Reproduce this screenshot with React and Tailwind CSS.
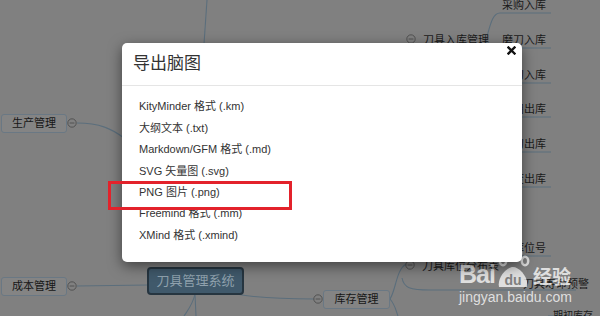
const font = 'font-["Liberation_Sans","Noto_Sans_CJK_SC",sans-serif]'

const formats = [
  'KityMinder 格式 (.km)',
  '大纲文本 (.txt)',
  'Markdown/GFM 格式 (.md)',
  'SVG 矢量图 (.svg)',
  'PNG 图片 (.png)',
  'Freemind 格式 (.mm)',
  'XMind 格式 (.xmind)',
]

// right-hand branches of 刀具入库管理 (label, underline y)
const leaves = [
  ['采购入库', 13],
  ['磨刀入库', 48],
  ['修刀入库', 83],
  ['领用出库', 117],
  ['磨刀出库', 152],
  ['报废出库', 187],
  ['刀具库位号', 256],
]

function Node({ x, y, w, label }) {
  return (
    <div
      className="absolute flex h-[19px] items-center justify-center rounded-[3px] border border-[#6a7884] bg-[#848484] text-[11px] text-[#161616]"
      style={{ left: x, top: y, width: w }}
    >
      {label}
    </div>
  )
}

function Fold({ x, y }) {
  return (
    <svg className="absolute" style={{ left: x - 5, top: y - 5 }} width="10" height="10" viewBox="0 0 10 10">
      <circle cx="5" cy="5" r="4.2" fill="#808080" stroke="#4d4d4d" strokeWidth="0.9" />
      <path d="M2.6 5h4.8" stroke="#4d4d4d" strokeWidth="0.9" />
    </svg>
  )
}

function MindMap() {
  return (
    <>
      <svg className="absolute inset-0" width="600" height="316" viewBox="0 0 600 316" fill="none">
        <g stroke="#5b6e7c" strokeWidth="1.1">
          <path d="M207 0 L204 44" />
          <path d="M77 123 C100 123 112 129 124 138" />
          <path d="M77 286 L148 285" />
          <path d="M236 294 C262 299 292 299 314 299" />
          <path d="M195 294 C193 304 188 310 184 316" />
          <path d="M195 294 L196 316" />
          {leaves.slice(0, 6).map(([, y], i) => (
            <path key={i} d={`M486 40 C490 ${(40 + y) / 2} 492 ${y} 500 ${y} L551 ${y}`} />
          ))}
          <path d="M500 256 L551 256" />
          <path d="M390 299 C396 290 396 270 406 264" />
          <path d="M390 299 C396 306 396 312 398 316" />
          <path d="M402 278 C404 288 410 290 430 290 L576 290" />
          <path d="M548 316 L590 316" />
        </g>
      </svg>

      <Node x={1} y={114} w={66} label="生产管理" />
      <Fold x={72} y={123} />
      <Node x={1} y={277} w={66} label="成本管理" />
      <Fold x={72} y={286} />
      <Fold x={318} y={299} />
      <Node x={323} y={290} w={67} label="库存管理" />

      <div className="absolute left-[147px] top-[267px] flex h-[28px] w-[97px] items-center justify-center rounded-[4px] border-2 border-[#263540] bg-[#40596b] text-[13px] text-[#8fa1ad]">
        刀具管理系统
      </div>

      <Fold x={411} y={39} />
      <div className="absolute left-[423px] top-[32px] text-[11px] text-[#1a1a1a]">刀具入库管理</div>
      <Fold x={410} y={265} />
      <div className="absolute left-[422px] top-[258px] text-[11px] text-[#1a1a1a]">刀具库位分布表</div>
      <div className="absolute left-[523px] top-[276px] text-[11px] text-[#1a1a1a]">刀具寿命预警</div>
      <div className="absolute left-[553px] top-[308px] whitespace-nowrap text-[10px] text-[#1a1a1a]">期初库存</div>

      {leaves.map(([label, y]) => (
        <div
          key={label}
          className="absolute flex w-[50px] justify-end whitespace-nowrap text-[11px] leading-none text-[#1a1a1a]"
          style={{ left: 496, top: y - 13 }}
        >
          {label}
        </div>
      ))}
    </>
  )
}

function Watermark() {
  return (
    <div className="pointer-events-none absolute left-[459px] top-[247px] flex flex-col text-white/75">
      <div className="flex items-end">
        <span className="text-[25px] font-bold leading-none tracking-[-1px]">Bai</span>
        <svg width="36" height="42" viewBox="0 0 36 42" className="-mb-[2px]">
          <g fill="none" stroke="rgba(255,255,255,0.75)" strokeWidth="2.5">
            <ellipse cx="8" cy="14" rx="3.2" ry="4.2" />
            <ellipse cx="15" cy="6" rx="3.2" ry="4.2" />
            <ellipse cx="23" cy="6" rx="3.2" ry="4.2" />
            <ellipse cx="30" cy="14" rx="3.2" ry="4.2" />
          </g>
          <path d="M4 40 C2 30 12 20 18 20 C24 20 34 30 32 40 Z" fill="rgba(255,255,255,0.75)" />
          <text x="18" y="38" textAnchor="middle" fontSize="14" fontWeight="700" fill="#808080" fontFamily="Liberation Sans, sans-serif">du</text>
        </svg>
        <span className="ml-[2px] text-[19px] font-bold leading-none">经验</span>
      </div>
      <span className="mt-[3px] text-[14px] leading-none">jingyan.baidu.com</span>
    </div>
  )
}

export default function App() {
  return (
    <div className={`relative h-[316px] w-[600px] overflow-hidden bg-[#808080] ${font}`}>
      <MindMap />
      <Watermark />

      <div className="absolute left-[122px] top-[43px] w-[400px] rounded-[5px] bg-white shadow-[0_4px_14px_rgba(0,0,0,0.5)]">
        <div className="relative flex h-[43px] items-center border-b border-[#e5e5e5] pl-[11px]">
          <h3 className="text-[17px] font-normal text-[#333]">导出脑图</h3>
          <svg className="absolute right-[6px] top-[3px]" width="9" height="9" viewBox="0 0 9 9">
            <path d="M1.5 1.5l6 6M7.5 1.5l-6 6" stroke="#111" strokeWidth="2.4" strokeLinecap="square" />
          </svg>
        </div>
        <ul className="px-[17px] pb-[16px] pt-[10px]">
          {formats.map((f) => (
            <li key={f} className="flex h-[21.4px] items-center text-[11px] text-[#333]">
              {f}
            </li>
          ))}
        </ul>
      </div>

      <div className="absolute left-[108px] top-[181px] h-[29px] w-[184px] border-[3px] border-[#e3222b]" />
    </div>
  )
}
